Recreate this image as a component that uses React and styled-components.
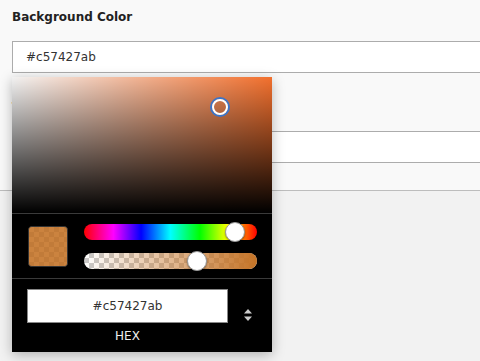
import React from "react";
import styled, { createGlobalStyle } from "styled-components";

const GlobalStyle = createGlobalStyle`
  html, body {
    margin: 0;
    padding: 0;
    background: #f9f9f9;
    overflow: hidden;
    font-family: "DejaVu Sans", Verdana, sans-serif;
  }
`;

const COLOR = { r: 197, g: 116, b: 39, a: 0xab / 255 };
const HUE = 29;

const checker = (a, b, size) => `
  background-image:
    linear-gradient(45deg, ${a} 25%, transparent 25%, transparent 75%, ${a} 75%),
    linear-gradient(45deg, ${a} 25%, transparent 25%, transparent 75%, ${a} 75%);
  background-size: ${size * 2}px ${size * 2}px;
  background-position: 0 0, ${size}px ${size}px;
  background-color: ${b};
`;

const Page = styled.div`
  height: 361px;
  display: flex;
  flex-direction: column;
`;

const Section = styled.div`
  padding: 10px 0 0 12px;
`;

const Label = styled.div`
  font-size: 12px;
  line-height: 14px;
  font-weight: bold;
  color: #222;
  margin-bottom: 17px;
`;

const Field = styled.div`
  position: relative;
  margin-right: -20px;
  margin-bottom: ${(p) => p.$gap || 0}px;
`;

const TextInput = styled.div`
  box-sizing: border-box;
  height: 32px;
  background: #fff;
  border: 1px solid #acacac;
  padding-left: 13px;
  font-size: 12px;
  line-height: 30px;
  color: #333;
`;

const Footer = styled.div`
  flex: 1;
  margin-top: 27px;
  border-top: 1px solid #bdbdbd;
  background: #f2f2f2;
`;

const Popup = styled.div`
  position: absolute;
  left: 0;
  top: calc(100% + 4px);
  width: 260px;
  background: #000;
  box-shadow: 0 3px 12px rgba(0, 0, 0, 0.28);
  z-index: 10;
`;

const Saturation = styled.div`
  position: relative;
  height: 136px;
  background:
    linear-gradient(to top, #000, rgba(0, 0, 0, 0.05)),
    linear-gradient(to right, #fff, rgba(255, 255, 255, 0)),
    #ff7630;
`;

const Cursor = styled.div`
  position: absolute;
  width: 12px;
  height: 12px;
  border-radius: 50%;
  border: 2px solid #fff;
  box-shadow: 0 0 0 2px #3b74c9;
  transform: translate(-8px, -8px);
`;

const Divider = styled.div`
  height: 1px;
  background: #3a3a3a;
`;

const Controls = styled.div`
  display: flex;
  align-items: center;
  gap: 16px;
  padding: 10px 15px 9px 16px;
`;

const Swatch = styled.div`
  width: 40px;
  height: 41px;
  box-sizing: border-box;
  border-radius: 4px;
  border: 1px solid #333;
  overflow: hidden;
  ${checker("#b98a5e", "#d6a070", 5)}
`;

const Sliders = styled.div`
  flex: 1;
  display: flex;
  flex-direction: column;
  gap: 13px;
`;

const Track = styled.div`
  position: relative;
  height: 16px;
  border-radius: 8px;
  ${(p) => p.$alpha && checker("#c9c9c9", "#fff", 5)}
`;

const TrackFill = styled.div`
  height: 100%;
  border-radius: 8px;
  background: ${(p) => p.$bg};
`;

const Thumb = styled.div`
  position: absolute;
  top: 50%;
  width: 20px;
  height: 20px;
  box-sizing: border-box;
  border-radius: 50%;
  background: #fff;
  border: 1px solid #999;
  box-shadow: 0 1px 2px rgba(0, 0, 0, 0.4);
  transform: translate(-50%, -50%);
`;

const HexRow = styled.div`
  display: flex;
  align-items: center;
  gap: 10px;
  padding: 10px 15px 9px 15px;
`;

const HexCol = styled.div`
  width: 201px;
  display: flex;
  flex-direction: column;
  align-items: center;
  gap: 6px;
`;

const HexInput = styled.div`
  box-sizing: border-box;
  width: 100%;
  height: 34px;
  background: #fff;
  border: 1px solid #888;
  text-align: center;
  font-size: 12px;
  line-height: 32px;
  color: #333;
`;

const HexLabel = styled.div`
  color: #eee;
  font-size: 12px;
  line-height: 14px;
`;

const Toggle = styled.div`
  flex: 1;
  display: flex;
  justify-content: center;
  padding-bottom: 2px;
`;

const pos = (p) => `calc(10px + ${p} * (100% - 20px))`;

export default function App() {
  const hex = "#c57427ab";
  const rgb = `${COLOR.r}, ${COLOR.g}, ${COLOR.b}`;
  return (
    <>
      <GlobalStyle />
      <Page>
        <Section>
          <Label>Background Color</Label>
          <Field $gap={27}>
            <TextInput>{hex}</TextInput>
            <Popup>
              <Saturation>
                <Cursor style={{ left: "80%", top: "22%" }} />
              </Saturation>
              <Divider />
              <Controls>
                <Swatch>
                  <TrackFill $bg={`rgba(${rgb}, ${COLOR.a})`} style={{ borderRadius: 0 }} />
                </Swatch>
                <Sliders>
                  <Track>
                    <TrackFill $bg="linear-gradient(to right, #f00 0%, #f0f 17%, #00f 33%, #0ff 50%, #0f0 67%, #ff0 83%, #f00 100%)" />
                    <Thumb style={{ left: pos(1 - HUE / 360) }} />
                  </Track>
                  <Track $alpha>
                    <TrackFill $bg={`linear-gradient(to right, rgba(${rgb}, 0), rgb(${rgb}))`} />
                    <Thumb style={{ left: pos(COLOR.a) }} />
                  </Track>
                </Sliders>
              </Controls>
              <Divider />
              <HexRow>
                <HexCol>
                  <HexInput>{hex}</HexInput>
                  <HexLabel>HEX</HexLabel>
                </HexCol>
                <Toggle>
                  <svg width="10" height="14" viewBox="0 0 10 14">
                    <path d="M5 1 L9 5.5 H1 Z" fill="#ccc" />
                    <path d="M5 13 L9 8.5 H1 Z" fill="#ccc" />
                  </svg>
                </Toggle>
              </HexRow>
            </Popup>
          </Field>
          <Label>Text Color</Label>
          <Field>
            <TextInput>#333333</TextInput>
          </Field>
        </Section>
        <Footer />
      </Page>
    </>
  );
}
